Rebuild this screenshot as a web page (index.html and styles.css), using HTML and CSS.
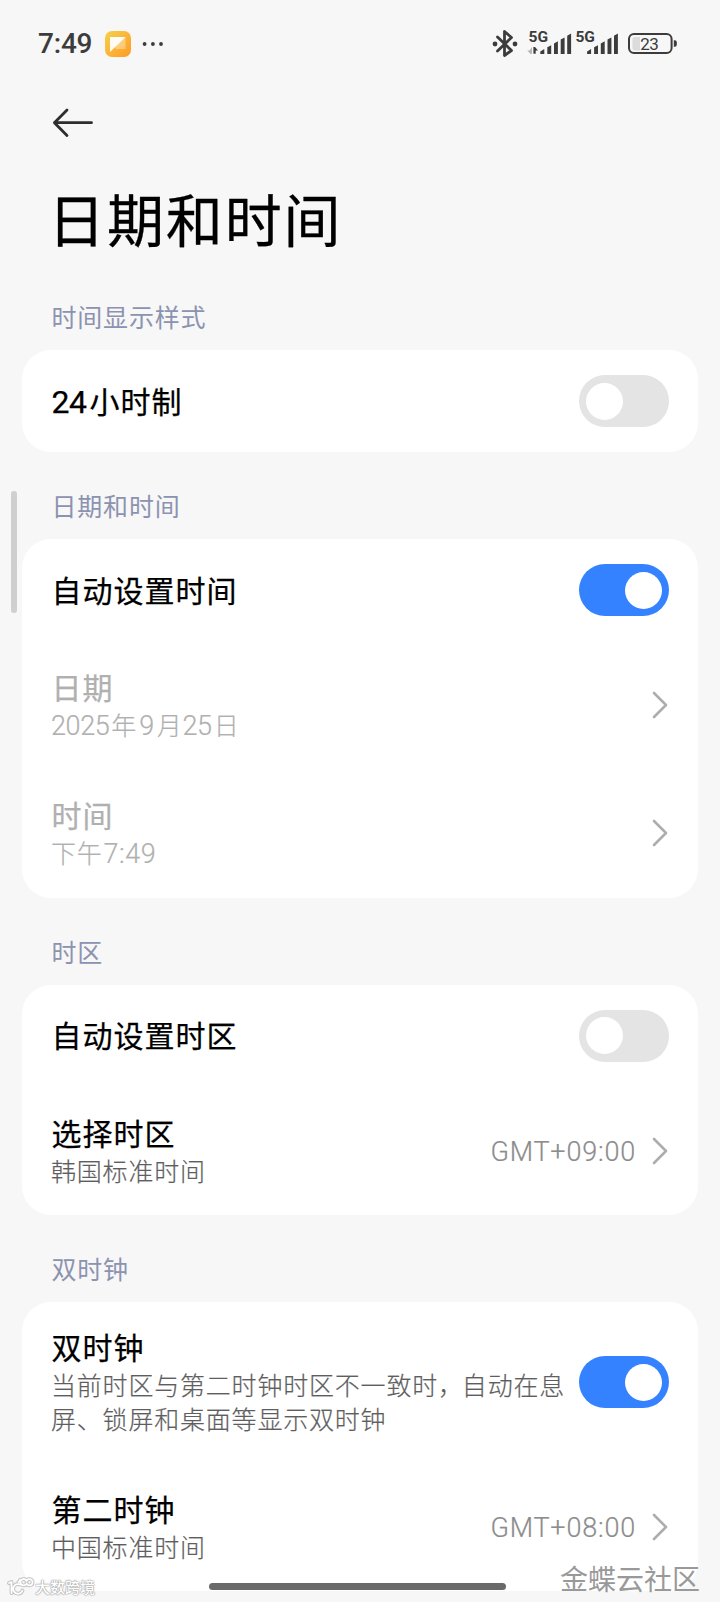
FILE: index.html
```html
<!DOCTYPE html>
<html lang="zh-CN">
<head>
    <meta charset="UTF-8">
    <meta name="viewport" content="width=device-width, initial-scale=1.0">
    <title>日期和时间</title>
    <link rel="stylesheet" href="styles.css">
</head>
<body>
    <header class="status-bar">
        <div class="status-left">
            <span class="clock">7:49</span>
            <svg class="app-icon" width="26" height="26" viewBox="0 0 26 26">
                <defs>
                    <linearGradient id="appBg" x1="0" y1="0" x2="1" y2="1">
                        <stop offset="0" stop-color="#f5d24a"/>
                        <stop offset="1" stop-color="#ff9a26"/>
                    </linearGradient>
                </defs>
                <rect width="26" height="26" rx="7" fill="url(#appBg)"/>
                <path d="M5 6h15.5v12H11z" fill="#fff" opacity=".35"/>
                <path d="M5 6h15.5L5 21z" fill="#fff" opacity=".93"/>
            </svg>
            <svg class="dots" width="22" height="6" viewBox="0 0 22 6">
                <circle cx="2.6" cy="3" r="1.9"/>
                <circle cx="10.9" cy="3" r="1.9"/>
                <circle cx="19" cy="3" r="1.9"/>
            </svg>
        </div>
        <svg class="status-icons" width="188" height="32" viewBox="490 28 188 32">
            <!-- bluetooth -->
            <path d="M497.5 37L511.5 50.5L504.500 55.500V31.500L511.500 37.500L497.500 51" fill="none" stroke="#3c3c3c" stroke-width="2.800" stroke-linejoin="round" stroke-linecap="round"/>
            <circle cx="495" cy="44" r="2.4"/>
            <circle cx="515" cy="44" r="2.4"/>
            <!-- sim 1 -->
            <text class="net" x="528.6" y="42.3" textLength="19.6" lengthAdjust="spacingAndGlyphs">5G</text>
            <path d="M532 47v6.8h-1.6l-3.2-3.2h2.4z" fill="#b5b5b5"/>
            <path d="M533.4 53.8V47h1.6l3 3.4h-2.3v3.4z"/>
            <path d="M540.3 54v-2.5l4-2.5v5zM547.3 54v-6.8l3.9-2v8.8zM554 54V43.5l3.9-2.2V54zM560.7 54V39.6l3.9-2.2V54zM567.2 54V35.8l3.9-2.2V54z"/>
            <!-- sim 2 -->
            <text class="net" x="575.4" y="42.3" textLength="19.6" lengthAdjust="spacingAndGlyphs">5G</text>
            <path d="M587.1 54v-2.5l4-2.5v5zM594.1 54v-6.8l3.9-2v8.8zM600.8 54V43.5l3.9-2.2V54zM607.5 54V39.6l3.9-2.2V54zM614 54V35.8l3.9-2.2V54z"/>
            <!-- battery -->
            <rect x="629" y="34.1" width="42.6" height="18.8" rx="5" fill="none" stroke="#3c3c3c" stroke-width="2"/>
            <path d="M635 37h5v13.4h-5q-2.6 0-2.6-2.6v-8.2q0-2.6 2.6-2.6z" fill="#dcdcdc"/>
            <path d="M673.8 40.3h1q2 0 2 2v2.4q0 2-2 2h-1z"/>
            <text class="level" x="640.3" y="49.9" textLength="18.6">23</text>
        </svg>
    </header>

    <nav class="nav">
        <svg class="back" width="42" height="30" viewBox="0 0 42 30">
            <path d="M15 2L2.4 14.7L15 27.400M2.400 14.700H39.500" fill="none" stroke="#2e2e2e" stroke-width="2.800" stroke-linecap="round" stroke-linejoin="round"/>
        </svg>
    </nav>
    <h1 class="page-title">日期和时间</h1>

    <main>
        <h2 class="section-label">时间显示样式</h2>
        <section class="card">
            <div class="row">
                <div class="row-title"><span class="num">24</span>小时制</div>
                <div class="toggle"></div>
            </div>
        </section>

        <h2 class="section-label">日期和时间</h2>
        <section class="card">
            <div class="row">
                <div class="row-title">自动设置时间</div>
                <div class="toggle on"></div>
            </div>
            <div class="row tall disabled">
                <div class="row-text">
                    <div class="row-title">日期</div>
                    <div class="row-sub"><span class="num">2025</span>年<span class="num single">9</span>月<span class="num">25</span>日</div>
                </div>
                <svg class="chevron" width="16" height="28" viewBox="0 0 16 28"><path d="M2 2l12 12L2 26"/></svg>
            </div>
            <div class="row tall disabled">
                <div class="row-text">
                    <div class="row-title">时间</div>
                    <div class="row-sub">下午<span class="num time">7:49</span></div>
                </div>
                <svg class="chevron" width="16" height="28" viewBox="0 0 16 28"><path d="M2 2l12 12L2 26"/></svg>
            </div>
        </section>

        <h2 class="section-label">时区</h2>
        <section class="card">
            <div class="row">
                <div class="row-title">自动设置时区</div>
                <div class="toggle"></div>
            </div>
            <div class="row tall">
                <div class="row-text">
                    <div class="row-title">选择时区</div>
                    <div class="row-sub">韩国标准时间</div>
                </div>
                <span class="value">GMT+09:00</span>
                <svg class="chevron" width="16" height="28" viewBox="0 0 16 28"><path d="M2 2l12 12L2 26"/></svg>
            </div>
        </section>

        <h2 class="section-label">双时钟</h2>
        <section class="card">
            <div class="row double">
                <div class="row-text">
                    <div class="row-title">双时钟</div>
                    <div class="row-sub">当前时区与第二时钟时区不一致时<span class="comma">，</span>自动在息<br>屏、锁屏和桌面等显示双时钟</div>
                </div>
                <div class="toggle on"></div>
            </div>
            <div class="row tall">
                <div class="row-text">
                    <div class="row-title">第二时钟</div>
                    <div class="row-sub">中国标准时间</div>
                </div>
                <span class="value">GMT+08:00</span>
                <svg class="chevron" width="16" height="28" viewBox="0 0 16 28"><path d="M2 2l12 12L2 26"/></svg>
            </div>
        </section>
    </main>

    <div class="scrollbar"></div>
    <div class="home-bar"></div>
    <div class="mark-left">
        <svg width="28" height="20" viewBox="0 0 28 20">
            <g fill="none" stroke-linecap="round" stroke-linejoin="round">
                <path id="markLogo" stroke="#c2c2c2" stroke-width="3.8" d="M2 6l2.5-1v11M15.500 13.500a4.800 4.800 0 1 1-2.500-6M11.500 5l1.500-1v-1M19.500 4a3.200 3.200 0 1 0 0 2.500a3.200 3.200 0 1 0 0-2.500"/>
                <path stroke="#fff" stroke-width="1.8" d="M2 6l2.5-1v11M15.500 13.500a4.800 4.800 0 1 1-2.500-6M11.500 5l1.500-1v-1M19.500 4a3.200 3.200 0 1 0 0 2.500a3.200 3.200 0 1 0 0-2.500"/>
            </g>
        </svg>
        <span>大数跨境</span>
    </div>
    <div class="mark-right">金蝶云社区</div>
</body>
</html>
```

FILE: styles.css
```css
* {
    box-sizing: border-box;
}
body {
    position: relative;
    margin: 0;
    width: 720px;
    height: 1602px;
    overflow: hidden;
    background: #f7f7f7;
    color: #000;
    font-family: "Noto Sans CJK SC", sans-serif;
}
h1, h2 {
    margin: 0;
    font-weight: 400;
}
svg {
    display: block;
    flex: none;
}

/* status bar */
.status-bar {
    display: flex;
    justify-content: space-between;
    align-items: center;
    height: 88px;
    padding: 0 42px 0 38px;
}
.status-left {
    display: flex;
    align-items: center;
}
.clock {
    width: 67px;
    font: 500 28px/32px Roboto, sans-serif;
    letter-spacing: -0.2px;
    color: #3c3c3c;
}
.dots {
    margin-left: 11px;
    fill: #3c3c3c;
}
.status-icons {
    fill: #3c3c3c;
}
.net {
    font: 700 15px Roboto, sans-serif;
}
.level {
    font: 400 17px Roboto, sans-serif;
}

.nav {
    height: 70px;
    padding: 20px 0 0 52px;
}
.page-title {
    height: 123px;
    padding: 17px 0 0 48px;
    font-size: 57px;
    line-height: 84px;
    letter-spacing: 1.9px;
    -webkit-text-stroke: 0.3px;
}

/* sections */
.section-label {
    height: 87px;
    padding: 35px 0 0 51.5px;
    font-size: 25px;
    line-height: 36px;
    letter-spacing: 0.8px;
    color: #8c93b0;
}
.section-label:first-child {
    height: 69px;
    padding-top: 17px;
}
.card {
    margin: 0 22px;
    border-radius: 29px;
    background: #fff;
}
.row {
    display: flex;
    align-items: center;
    height: 102px;
    padding: 0 29px;
}
.row.tall {
    height: 128.3px;
}
.row.double {
    height: 161px;
}
.row-text {
    flex: 1;
    margin-top: -3px;
    white-space: nowrap;
}
.row-title {
    flex: 1;
    padding-left: 0.5px;
    font-size: 30px;
    line-height: 40px;
    letter-spacing: 1px;
    -webkit-text-stroke: 0.25px;
}
.row > .row-title {
    margin-top: -3px;
}
.row-sub {
    margin-top: 1px;
    font-size: 25px;
    font-weight: 300;
    line-height: 34px;
    letter-spacing: 0.8px;
    color: #5e5e5e;
    -webkit-text-stroke: 0.2px;
}
.comma {
    margin-right: -2px;
}
.num {
    font-family: Roboto, sans-serif;
    line-height: 1;
}
.row-title .num {
    margin-right: 3px;
    font-size: 32px;
    letter-spacing: -0.5px;
}
.row-sub .num {
    margin-right: 2px;
    font-size: 27px;
    letter-spacing: -0.4px;
}
.row-sub .num.single {
    margin: 0 3px 0 2px;
}
.row-sub .num.time {
    margin-left: 1px;
    letter-spacing: 0.5px;
}
.disabled .row-title,
.disabled .row-sub {
    color: #b0b0b0;
}
.value {
    margin: 2px 16px 0 0;
    font: 300 27px/34px Roboto, sans-serif;
    letter-spacing: 0.8px;
    color: #8c8c8c;
    -webkit-text-stroke: 0.2px;
}
.chevron {
    margin-right: 1px;
}
.chevron path {
    fill: none;
    stroke: #adadad;
    stroke-width: 2.6;
    stroke-linecap: round;
    stroke-linejoin: round;
}
.toggle {
    display: flex;
    flex: none;
    align-items: center;
    width: 90px;
    height: 52px;
    padding: 0 7px;
    border-radius: 26px;
    background: #e4e4e4;
}
.toggle::before {
    content: "";
    width: 37px;
    height: 37px;
    border-radius: 50%;
    background: #fff;
}
.toggle.on {
    justify-content: flex-end;
    background: #3482ff;
}

/* overlays */
.scrollbar {
    position: absolute;
    top: 491px;
    left: 11px;
    width: 6px;
    height: 122px;
    border-radius: 3px;
    background: #cfcfcf;
}
.home-bar {
    position: absolute;
    top: 1583px;
    left: 209px;
    width: 297px;
    height: 7px;
    border-radius: 4px;
    background: #6a6a6a;
}
.mark-left {
    position: absolute;
    left: 7px;
    top: 1577px;
    display: flex;
    align-items: center;
    font-size: 15px;
    font-weight: 500;
    line-height: 20px;
    color: #fff;
    text-shadow: 0 0 1px #999, 0 0 1px #999, 0 0 2px #aaa;
}
.mark-right {
    position: absolute;
    right: 20px;
    top: 1558px;
    font-size: 28px;
    line-height: 40px;
    color: #999;
}
```
